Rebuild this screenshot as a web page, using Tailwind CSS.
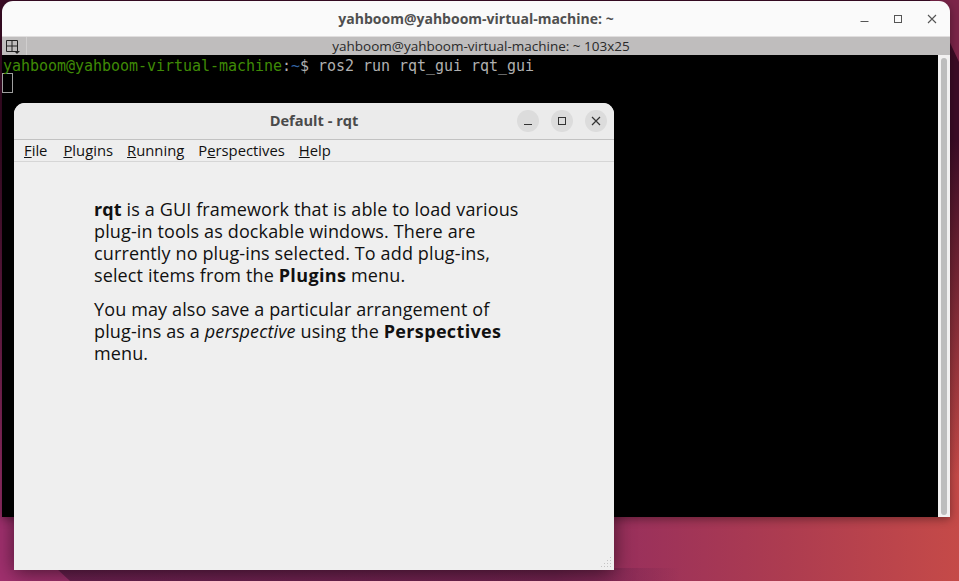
<!DOCTYPE html>
<html lang="en">
<head>
    <meta charset="UTF-8">
    <script src="https://cdn.jsdelivr.net/npm/@tailwindcss/browser@4"></script>
    <title>rqt</title>
</head>
<body class="w-[959px] h-[581px] overflow-hidden relative bg-[linear-gradient(90deg,#a0306e_0%,#962e5e_62%,#ad3c50_82%,#c54a48_100%)] font-['Open_Sans',sans-serif]">
    <!-- wallpaper -->
    <div class="absolute inset-0 bg-[linear-gradient(180deg,#3c0c26_0%,#3c0c26_24%,rgba(60,12,38,0.55)_50%,rgba(60,12,38,0)_82%)]"></div>
    <svg class="absolute inset-0" width="959" height="581" viewBox="0 0 959 581">
        <defs>
            <linearGradient id="wedge" x1="0" y1="0" x2="1" y2="0">
                <stop offset="0" stop-color="#4f1840" stop-opacity="0.65"/>
                <stop offset="0.8" stop-color="#4f1840" stop-opacity="0.5"/>
                <stop offset="1" stop-color="#4f1840" stop-opacity="0"/>
            </linearGradient>
        </defs>
        <polygon points="930,0 959,0 959,62" fill="#7c2549"/>
        <polygon points="56,568 70,581 680,581 680,568" fill="url(#wedge)"/>
    </svg>

    <!-- terminal window -->
    <div class="absolute left-[2px] top-[1px] w-[948px] h-[516px] flex flex-col rounded-t-[11px] overflow-hidden shadow-[0_2px_10px_rgba(0,0,0,0.4)]">
        <div class="h-[36px] shrink-0 bg-[#fafafa] flex items-center relative border-b border-[#e0dede]">
            <p class="w-full text-center text-[14px] font-bold text-[#4f4f4f]">yahboom@yahboom-virtual-machine: ~</p>
            <svg class="absolute right-[78px] top-[9px]" width="14" height="14" viewBox="0 0 14 14"><path d="M2.5 11.5h8" stroke="#555" stroke-width="1"/></svg>
            <svg class="absolute right-[45px] top-[11px]" width="14" height="14" viewBox="0 0 14 14"><rect x="3.5" y="3.5" width="7" height="7" fill="none" stroke="#555" stroke-width="1"/></svg>
            <svg class="absolute right-[11px] top-[11px]" width="14" height="14" viewBox="0 0 14 14"><path d="M3 3l8 8M11 3l-8 8" stroke="#555" stroke-width="1.1"/></svg>
        </div>
        <div class="h-[18px] shrink-0 bg-[#bfbdbd] flex items-center relative">
            <div class="w-[25px] h-full border-r border-[#d0cece] pl-[4px] pt-[3px]">
                <svg width="14" height="14" viewBox="0 0 14 14"><path d="M.5.5h11v11h-11zM6 .5v11M.5 6h11" fill="none" stroke="#222" stroke-width="1"/><path d="M8 11h6l-3 3z" fill="#222"/></svg>
            </div>
            <p class="flex-1 text-center text-[13.5px] leading-[18px] text-[#2a2a2a] pr-[15px]">yahboom@yahboom-virtual-machine: ~ 103x25</p>
        </div>
        <div class="flex-1 flex min-h-0">
            <div class="flex-1 bg-black font-['DejaVu_Sans_Mono',monospace] text-[15px] tracking-[-0.03px] leading-[19px] pt-[2px] pl-[1px]">
                <p class="whitespace-pre"><span class="text-[#3f8a06]">yahboom@yahboom-virtual-machine</span><span class="text-[#b0b0b0]">:</span><span class="text-[#3465a4]">~</span><span class="text-[#b0b0b0]">$ ros2 run rqt_gui rqt_gui</span></p>
                <div class="w-[11px] h-[20px] -mt-[3px] -ml-[1px] border border-[#a0a0a0]"></div>
            </div>
            <div class="w-[12px] bg-[#f2f1f1] pt-[3px] pb-[2px] flex justify-center">
                <div class="w-[6px] h-full rounded-full bg-[#bdbdbd]"></div>
            </div>
        </div>
    </div>

    <!-- rqt window -->
    <div class="absolute left-[14px] top-[103px] w-[600px] h-[467px] flex flex-col rounded-t-[11px] overflow-hidden bg-[#efefef] text-[#111] shadow-[0_3px_20px_rgba(0,0,0,0.55)]">
        <div class="h-[37px] shrink-0 bg-[#ebebeb] border-b border-[#c2c2c2] relative flex items-center justify-center">
            <p class="text-[14.6px] font-bold text-[#4a4a4a]">Default - rqt</p>
            <div class="absolute right-[7px] top-[7px] flex gap-[12px]">
                <div class="w-[22px] h-[22px] rounded-full bg-[#dcdcdc] flex items-center justify-center">
                    <svg width="12" height="12" viewBox="0 0 12 12"><path d="M2 9.5h8" stroke="#333" stroke-width="1"/></svg>
                </div>
                <div class="w-[22px] h-[22px] rounded-full bg-[#dcdcdc] flex items-center justify-center">
                    <svg width="12" height="12" viewBox="0 0 12 12"><rect x="2.5" y="2.5" width="7" height="7" fill="none" stroke="#333" stroke-width="1"/></svg>
                </div>
                <div class="w-[22px] h-[22px] rounded-full bg-[#dcdcdc] flex items-center justify-center">
                    <svg width="12" height="12" viewBox="0 0 12 12"><path d="M2 2l8 8M10 2l-8 8" stroke="#333" stroke-width="1.2"/></svg>
                </div>
            </div>
        </div>
        <div class="h-[22px] shrink-0 bg-[#eeeeee] border-b border-[#d6d6d6] flex items-center pl-[10px] gap-[14px] text-[14.8px] decoration-[1.5px]">
            <span class="mr-[2px]"><span class="underline">F</span>ile</span>
            <span><span class="underline">P</span>lugins</span>
            <span><span class="underline">R</span>unning</span>
            <span>P<span class="underline">e</span>rspectives</span>
            <span><span class="underline">H</span>elp</span>
        </div>
        <div class="flex-1 relative pl-[80px] pt-[36px] text-[18px] tracking-[0.13px] leading-[22px]">
            <div class="w-[436px]">
                <p class="mb-[12px]"><b>rqt</b> is a GUI framework that is able to load various <span class="whitespace-nowrap">plug-in</span> tools as dockable windows. There are currently no <span class="whitespace-nowrap">plug-ins</span> selected. To add <span class="whitespace-nowrap">plug-ins,</span> select items from the <b class="tracking-[0.35px]">Plugins</b> menu.</p>
                <p>You may also save a particular arrangement of <span class="whitespace-nowrap">plug-ins</span> as a <i>perspective</i> using the <b class="tracking-[0.35px]">Perspectives</b> menu.</p>
            </div>
            <!-- size grip -->
            <svg class="absolute right-[2px] bottom-[2px]" width="11" height="11" viewBox="0 0 11 11" fill="#c4c4c4"><rect x="9" y="0" width="1" height="1"/><rect x="6" y="3" width="1" height="1"/><rect x="9" y="3" width="1" height="1"/><rect x="3" y="6" width="1" height="1"/><rect x="6" y="6" width="1" height="1"/><rect x="9" y="6" width="1" height="1"/><rect x="0" y="9" width="1" height="1"/><rect x="3" y="9" width="1" height="1"/><rect x="6" y="9" width="1" height="1"/><rect x="9" y="9" width="1" height="1"/></svg>
        </div>
    </div>
</body>
</html>
